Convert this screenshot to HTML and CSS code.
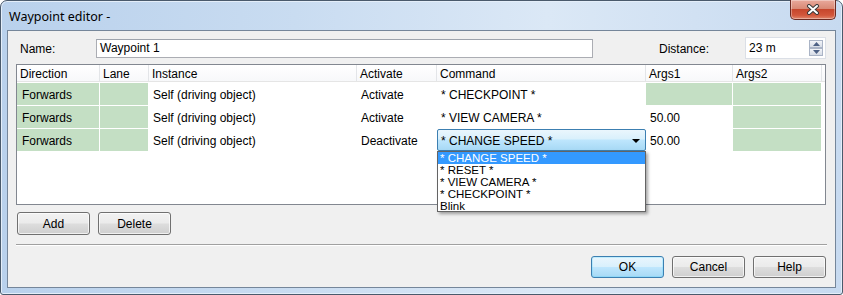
FILE: index.html
```html
<!DOCTYPE html>
<html>
<head>
<meta charset="utf-8">
<link rel="stylesheet" href="styles.css">
</head>
<body>
<div class="window">
  <div class="titlebar">
    <span class="title">Waypoint editor -</span>
    <div class="close">
      <svg width="14" height="11" viewBox="0 0 14 11">
        <path d="M3 2 L11 9 M11 2 L3 9" stroke="#3a3a3a" stroke-width="4" stroke-linecap="round"/>
        <path d="M3 2 L11 9 M11 2 L3 9" stroke="#ffffff" stroke-width="2" stroke-linecap="round"/>
      </svg>
    </div>
  </div>
  <div class="client">
    <div class="name-row">
      <span class="lbl name-lbl">Name:</span>
      <div class="input name-input">Waypoint 1</div>
      <span class="lbl dist-lbl">Distance:</span>
      <div class="input spin">
        <span>23 m</span>
        <div class="spin-btns">
          <div class="sb"><svg width="7" height="4" viewBox="0 0 7 4"><path d="M0 4 L3.5 0 L7 4 Z" fill="#4d6185"/></svg></div>
          <div class="sb"><svg width="7" height="4" viewBox="0 0 7 4"><path d="M0 0 L3.5 4 L7 0 Z" fill="#4d6185"/></svg></div>
        </div>
      </div>
    </div>

    <div class="table">
      <div class="row head">
        <div class="hc">Direction</div>
        <div class="hc">Lane</div>
        <div class="hc">Instance</div>
        <div class="hc">Activate</div>
        <div class="hc">Command</div>
        <div class="hc">Args1</div>
        <div class="hc">Args2</div>
      </div>
      <div class="body">
        <div class="row">
          <div class="c g">Forwards</div>
          <div class="c g"></div>
          <div class="c">Self (driving object)</div>
          <div class="c">Activate</div>
          <div class="c">* CHECKPOINT *</div>
          <div class="c g"></div>
          <div class="c g"></div>
        </div>
        <div class="row">
          <div class="c g">Forwards</div>
          <div class="c g"></div>
          <div class="c">Self (driving object)</div>
          <div class="c">Activate</div>
          <div class="c">* VIEW CAMERA *</div>
          <div class="c">50.00</div>
          <div class="c g"></div>
        </div>
        <div class="row">
          <div class="c g">Forwards</div>
          <div class="c g"></div>
          <div class="c">Self (driving object)</div>
          <div class="c">Deactivate</div>
          <div class="c combo-cell">
            <div class="combo">
              <span>* CHANGE SPEED *</span>
              <svg width="8" height="4" viewBox="0 0 8 4"><path d="M0 0 L8 0 L4 4 Z" fill="#000"/></svg>
            </div>
            <div class="droplist">
              <div class="item sel">* CHANGE SPEED *</div>
              <div class="item">* RESET *</div>
              <div class="item">* VIEW CAMERA *</div>
              <div class="item">* CHECKPOINT *</div>
              <div class="item">Blink</div>
            </div>
          </div>
          <div class="c">50.00</div>
          <div class="c g"></div>
        </div>
      </div>
    </div>

    <div class="btn-row">
      <div class="btn">Add</div>
      <div class="btn">Delete</div>
    </div>

    <div class="sep"></div>

    <div class="btn-row right">
      <div class="btn default">OK</div>
      <div class="btn">Cancel</div>
      <div class="btn">Help</div>
    </div>
  </div>
</div>
</body>
</html>
```

FILE: styles.css
```css
* { box-sizing: border-box; }
html, body { margin: 0; padding: 0; }
body {
  width: 843px;
  height: 295px;
  background: #ffffff;
  font-family: "Liberation Sans", Arial, sans-serif;
  font-size: 12px;
  color: #000;
  overflow: hidden;
}
.window {
  width: 843px;
  height: 295px;
  border: 1px solid #4a5a6c;
  border-radius: 7px 7px 3px 3px;
  background: linear-gradient(to right, #b9d1ec 0%, #c9dcf1 35%, #dbe8f6 65%, #c7daf0 100%);
  display: flex;
  flex-direction: column;
  box-shadow: inset 0 0 0 1px #e4eef9;
}
.titlebar {
  height: 29px;
  display: flex;
  align-items: center;
  justify-content: space-between;
  padding-left: 8px;
}
.title {
  font-family: "Noto Sans", "Open Sans", sans-serif;
  font-size: 12.5px;
  color: #000;
  margin-top: 1px;
}
.close {
  align-self: flex-start;
  margin-top: -1px;
  margin-right: 6px;
  width: 46px;
  height: 20px;
  border: 1px solid #6b2a22;
  border-top: none;
  border-radius: 0 0 5px 5px;
  background: linear-gradient(to bottom, #e9a99b 0%, #d98a76 45%, #c6472d 50%, #d2563b 80%, #e0866c 100%);
  display: flex;
  align-items: center;
  justify-content: center;
  box-shadow: inset 0 0 0 1px rgba(255,255,255,0.35);
}
.client {
  margin: 0 6px 6px 6px;
  height: 258px;
  border: 1px solid #75869a;
  background: #f0f0f0;
  padding: 0 8px;
  display: flex;
  flex-direction: column;
}
.name-row {
  margin-top: 6px;
  height: 22px;
  display: flex;
  align-items: center;
}
.lbl { white-space: nowrap; padding-top: 1px; }
.name-lbl { width: 80px; padding-left: 4px; }
.dist-lbl { margin-left: auto; width: 86px; }
.input {
  background: #fff;
  border: 1px solid #abadb3;
  border-top-color: #9da3ac;
  display: flex;
  align-items: center;
  padding-left: 3px;
}
.name-input { width: 497px; height: 19px; }
.spin {
  width: 81px;
  height: 22px;
  margin-right: 1px;
  justify-content: space-between;
  border-color: #dbdfe6;
}
.spin-btns {
  display: flex;
  flex-direction: column;
  margin-right: 2px;
}
.sb {
  width: 14px;
  height: 8px;
  border: 1px solid #aab4c6;
  background: linear-gradient(to bottom, #f3f5f9, #d6dce6);
  display: flex;
  align-items: center;
  justify-content: center;
}
.table {
  margin-top: 5px;
  width: 810px;
  height: 141px;
  border: 1px solid #828790;
  background: #fff;
}
.row {
  display: grid;
  grid-template-columns: 83px 49px 208px 80px 209px 87px 89px;
  height: 23px;
}
.row.head {
  height: 17px;
  border-bottom: 1px solid #e5e5e5;
  background: linear-gradient(to bottom, #ffffff, #f7f8fa);
}
.hc {
  padding-left: 3px;
  padding-top: 2px;
  border-right: 1px solid #e3e5e8;
  display: flex;
  align-items: center;
  white-space: nowrap;
}
.body { padding-top: 1px; }
.c {
  border-right: 1px solid #fff;
  border-bottom: 1px solid #fff;
  padding-left: 4px;
  padding-top: 2px;
  display: flex;
  align-items: center;
  white-space: nowrap;
}
.c.g { background: #c4dfc4; padding-left: 5px; }
.combo-cell {
  padding-left: 0;
  padding-top: 0;
  position: relative;
  border-bottom: none;
  border-right: none;
  align-items: stretch;
}
.combo {
  flex: 1;
  height: 22px;
  border: 1px solid #3c7fb1;
  border-radius: 2px;
  background: linear-gradient(to bottom, #eaf6fd 0%, #d9f0fc 45%, #bee6fd 50%, #a7d9f5 100%);
  display: flex;
  align-items: center;
  justify-content: space-between;
  padding: 1px 5px 0 3px;
}
.droplist {
  position: absolute;
  left: 0;
  top: 22px;
  width: 209px;
  height: 61px;
  background: #fff;
  border: 1px solid #646464;
  box-shadow: 2px 2px 3px rgba(0,0,0,0.35);
  z-index: 5;
}
.item {
  height: 12px;
  line-height: 12px;
  font-size: 11.5px;
  padding-left: 2px;
  white-space: nowrap;
  overflow: hidden;
}
.item.sel { background: #3399ff; color: #fff; }
.btn-row {
  display: flex;
  gap: 8px;
  margin-top: 7px;
  padding-left: 1px;
}
.btn-row.right {
  justify-content: flex-end;
  margin-top: 10px;
  padding-left: 0;
  padding-right: 1px;
}
.btn {
  width: 73px;
  height: 23px;
  border: 1px solid #707070;
  border-radius: 3px;
  background: linear-gradient(to bottom, #f2f2f2 0%, #ebebeb 48%, #dddddd 52%, #cfcfcf 100%);
  display: flex;
  align-items: center;
  justify-content: center;
  box-shadow: inset 0 0 0 1px rgba(255,255,255,0.7);
}
.btn-row.right .btn { height: 22px; }
.btn.default {
  border-color: #3c7fb1;
  background: linear-gradient(to bottom, #eaf6fd 0%, #d9f0fc 48%, #bee6fd 52%, #a7d9f5 100%);
  box-shadow: inset 0 0 0 1px #48d2ff40;
}
.sep {
  margin-top: 9px;
  height: 2px;
  border-top: 1px solid #a0a0a0;
  border-bottom: 1px solid #ffffff;
  width: 811px;
}
```
